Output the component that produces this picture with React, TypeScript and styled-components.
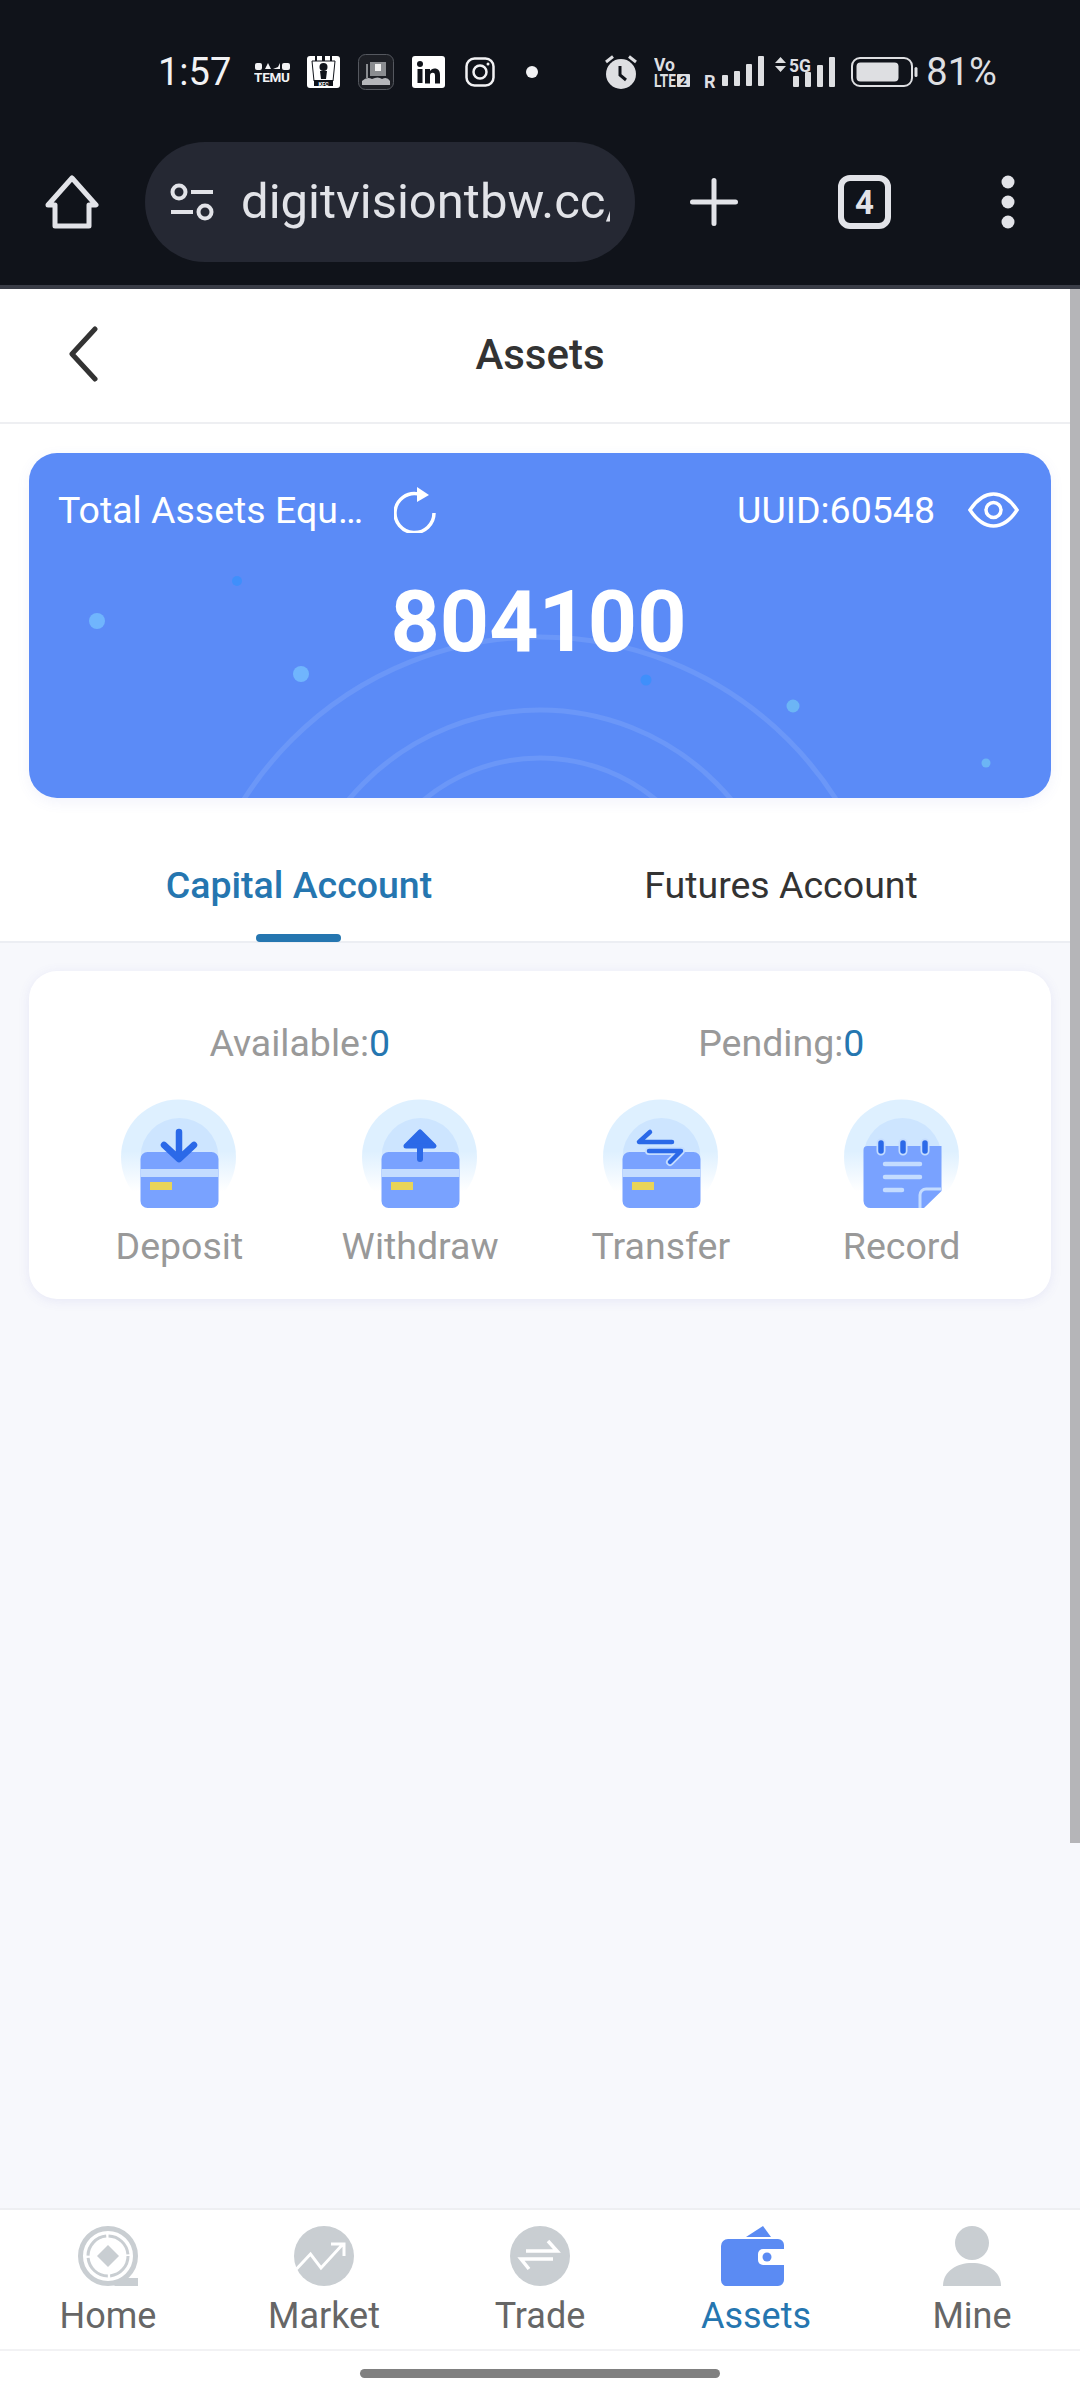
import * as React from 'react';
import styled, { createGlobalStyle } from 'styled-components';

const GlobalStyle = createGlobalStyle`
	html, body {
		margin: 0;
		padding: 0;
		background: #ffffff;
	}
	* {
		box-sizing: border-box;
	}
`;

const Screen = styled.div`
	width: 1080px;
	height: 2400px;
	display: flex;
	flex-direction: column;
	overflow: hidden;
	font-family: Roboto, 'Liberation Sans', sans-serif;
	background: #ffffff;
`;

/* browser chrome */
const Chrome = styled.div`
	height: 289px;
	flex: none;
	background: #10131a;
	border-bottom: 4px solid #3a3d47;
	color: #e2e3e8;
`;

const StatusBar = styled.div`
	height: 142px;
	padding: 2px 0 0 158px;
	display: flex;
	align-items: center;
`;

const BarItem = styled.div<{ $ml?: number }>`
	flex: none;
	display: flex;
	margin-left: ${(p) => p.$ml ?? 0}px;
`;

const Clock = styled.span`
	font-size: 38px;
	line-height: 44px;
	color: #f2f2f4;
`;

const Percent = styled.span`
	font-size: 38px;
	line-height: 44px;
	color: #dedfe2;
`;

const Toolbar = styled.div`
	height: 120px;
	padding-left: 45px;
	display: flex;
	align-items: center;
`;

const UrlPill = styled.div`
	width: 490px;
	height: 120px;
	margin-left: 46px;
	padding-left: 25px;
	border-radius: 60px;
	background: #252833;
	display: flex;
	align-items: center;
	gap: 27px;
`;

const UrlText = styled.div`
	width: 369px;
	overflow: hidden;
	white-space: nowrap;
	font-size: 49px;
	line-height: 60px;
	color: #e2e3e8;
`;

const TabCount = styled.div`
	width: 53px;
	height: 54px;
	margin-left: 100px;
	border: 6px solid #e2e3e8;
	border-radius: 12px;
	display: flex;
	align-items: center;
	justify-content: center;
	font-size: 33px;
	font-weight: 700;
	color: #e2e3e8;
`;

/* page */
const Page = styled.div`
	flex: 1;
	position: relative;
	display: flex;
	flex-direction: column;
	min-height: 0;
	background: #f7f8fc;
`;

const ScrollThumb = styled.div`
	position: absolute;
	top: 0;
	right: 0;
	width: 10px;
	height: 1554px;
	background: #b5b5b8;
`;

const PageHeader = styled.div`
	height: 135px;
	flex: none;
	display: grid;
	grid-template-columns: 1fr auto 1fr;
	align-items: center;
	padding-bottom: 3px;
	background: #ffffff;
	border-bottom: 2px solid #eeeff2;
`;

const BackButton = styled.div`
	padding-left: 67px;
	display: flex;
`;

const PageTitle = styled.div`
	font-size: 42px;
	font-weight: 500;
	color: #333333;
`;

const TopSection = styled.div`
	flex: none;
	background: #ffffff;
	padding-top: 29px;
`;

const HeroCard = styled.div`
	position: relative;
	width: 1022px;
	height: 345px;
	margin-left: 29px;
	padding: 34px 32px 0 29px;
	border-radius: 28px;
	overflow: hidden;
	background: #5b8bf7;
	color: #ffffff;
	box-shadow: 0 4px 14px rgba(91, 100, 200, 0.08);
`;

const HeroDecor = styled.svg`
	position: absolute;
	left: 0;
	top: 0;
`;

const HeroRow = styled.div`
	position: relative;
	height: 46px;
	display: flex;
	align-items: center;
`;

const HeroLabel = styled.span`
	width: 312px;
	overflow: hidden;
	white-space: nowrap;
	text-overflow: ellipsis;
	font-size: 37.5px;
`;

const RefreshIcon = styled.div`
	margin-left: 24px;
	display: flex;
`;

const HeroUuid = styled.span`
	margin-left: auto;
	font-size: 37.5px;
`;

const EyeIcon = styled.div`
	margin-left: 33px;
	display: flex;
`;

const HeroAmount = styled.div`
	position: relative;
	margin-top: 45px;
	text-align: center;
	font-size: 86px;
	line-height: 88px;
	font-weight: 700;
`;

const Tabs = styled.div`
	height: 145px;
	padding: 0 58px;
	display: grid;
	grid-template-columns: 1fr 1fr;
	border-bottom: 2px solid #eceef3;
`;

const Tab = styled.div<{ $active?: boolean }>`
	position: relative;
	display: flex;
	justify-content: center;
	padding-top: 65px;
	font-size: 37.5px;
	line-height: 44px;
	font-weight: ${(p) => (p.$active ? 500 : 400)};
	color: ${(p) => (p.$active ? '#2576b0' : '#333333')};
`;

const TabMarker = styled.div`
	position: absolute;
	left: 50%;
	bottom: -1px;
	width: 85px;
	height: 8px;
	margin-left: -43px;
	border-radius: 4px;
	background: #2576b0;
`;

const AccountCard = styled.div`
	flex: none;
	width: 1022px;
	height: 328px;
	margin: 28px 0 0 29px;
	padding: 50px 29px 0 30px;
	border-radius: 28px;
	background: #ffffff;
	box-shadow: 0 2px 12px rgba(90, 90, 200, 0.1);
`;

const BalanceRow = styled.div`
	display: grid;
	grid-template-columns: 1fr 1fr;
`;

const Balance = styled.div`
	text-align: center;
	font-size: 37.5px;
	line-height: 44px;
	color: #999999;
`;

const BalanceValue = styled.span`
	color: #2576b0;
`;

const ActionRow = styled.div`
	margin-top: 34px;
	display: grid;
	grid-template-columns: repeat(4, 1fr);
`;

const Action = styled.div`
	display: flex;
	flex-direction: column;
	align-items: center;
	font-size: 37.5px;
	line-height: 44px;
	color: #999999;
`;

const ActionLabel = styled.span`
	margin-top: 10px;
`;

const Spacer = styled.div`
	flex: 1;
`;

/* bottom nav */
const BottomNav = styled.div`
	flex: none;
	height: 143px;
	display: grid;
	grid-template-columns: repeat(5, 216px);
	background: #ffffff;
	border-top: 2px solid #eeeff2;
	border-bottom: 2px solid #f2f2f4;
`;

const NavItem = styled.div<{ $active?: boolean }>`
	padding-top: 16px;
	display: flex;
	flex-direction: column;
	align-items: center;
	font-size: 36px;
	line-height: 44px;
	color: ${(p) => (p.$active ? '#2576b0' : '#666666')};
`;

const NavLabel = styled.span`
	margin-top: 8px;
`;

const HomeBar = styled.div`
	flex: none;
	height: 49px;
	padding-top: 18px;
	display: flex;
	justify-content: center;
	background: #ffffff;
`;

const HomeHandle = styled.div`
	width: 360px;
	height: 9px;
	border-radius: 5px;
	background: #808080;
`;

const TinyLogoText = styled.text`
	font-family: Roboto, sans-serif;
	font-weight: 700;
`;

/* status icons */
const TemuIcon = () => (
	<svg width="36" height="20" viewBox="0 0 36 20">
		<rect x="1" y="1" width="7" height="7" rx="2" fill="#f2f2f4" />
		<path d="M11 7 l3 -6 l3 6z M19 7 l5 -2 l2 -4 v6z" fill="#f2f2f4" />
		<rect x="28" y="1" width="8" height="7" rx="2" fill="#f2f2f4" />
		<TinyLogoText x="0" y="20" fontSize="13.5" fill="#f2f2f4" textLength="36">TEMU</TinyLogoText>
	</svg>
);

const KfcIcon = () => (
	<svg width="33" height="32" viewBox="0 0 33 32">
		<rect width="33" height="32" rx="3" fill="#ffffff" />
		<path d="M8 0h2v5H8z M15 0h3v5h-3z M23 0h2v5h-2z" fill="#10131a" />
		<path d="M5 5h23l-2 20H7z" fill="#ffffff" stroke="#10131a" strokeWidth="1" />
		<circle cx="16.5" cy="11" r="4" fill="#10131a" />
		<path d="M13 15h7l-1 8h-5z" fill="#10131a" />
		<rect x="7" y="24" width="19" height="6" fill="#10131a" />
		<TinyLogoText x="16.5" y="29.5" fontSize="5.5" fill="#ffffff" textAnchor="middle">KFC</TinyLogoText>
	</svg>
);

const TrainIcon = () => (
	<svg width="36" height="36" viewBox="0 0 36 36">
		<rect x="0.5" y="0.5" width="35" height="35" rx="7" fill="#1d1f25" stroke="#55585f" />
		<path d="M8 10h2v14H8z M12 8h16v14H12z" fill="#8a8c90" />
		<rect x="17" y="10" width="6" height="7" fill="#f0f0f0" />
		<path d="M4 27 q5 -5 10 -2 q6 -3 10 0 q5 -3 8 2 v4 H4z" fill="#b5b6ba" />
	</svg>
);

const LinkedinIcon = () => (
	<svg width="33" height="32" viewBox="0 0 33 32">
		<rect width="33" height="32" rx="3" fill="#ffffff" />
		<circle cx="8" cy="8" r="3" fill="#10131a" />
		<path d="M5.5 13h5v14h-5z M13 13h5v2c1 -1.500 2.500 -2.500 4.500 -2.500c4 0 5.500 2.500 5.500 6.500v8.500h-5v-7.500c0 -2 -.5 -3.200 -2.200 -3.200c-1.800 0 -2.800 1.200 -2.800 3.200v7.500h-5z" fill="#10131a" />
	</svg>
);

const InstagramIcon = () => (
	<svg width="30" height="30" viewBox="0 0 30 30" fill="none" stroke="#f2f2f4" strokeWidth="2.500">
		<rect x="1.500" y="1.500" width="27" height="27" rx="8" />
		<circle cx="15" cy="15" r="6.500" />
		<circle cx="23" cy="7" r="1.500" fill="#f2f2f4" stroke="none" />
	</svg>
);

const NotificationDot = () => (
	<svg width="12" height="12" viewBox="0 0 12 12">
		<circle cx="6" cy="6" r="6" fill="#f2f2f4" />
	</svg>
);

const AlarmIcon = () => (
	<svg width="32" height="34" viewBox="0 0 32 34">
		<circle cx="16" cy="19" r="15" fill="#dedfe2" />
		<path d="M1 7 L8 1.500 M31 7 L24 1.500" stroke="#dedfe2" strokeWidth="3" />
		<path d="M15 11 V20 L21 25" fill="none" stroke="#10131a" strokeWidth="3" />
	</svg>
);

const VolteIcon = () => (
	<svg width="36" height="30" viewBox="0 0 36 30">
		<TinyLogoText x="0" y="13.500" fontSize="18" fill="#dedfe2" textLength="21" lengthAdjust="spacingAndGlyphs">Vo</TinyLogoText>
		<TinyLogoText x="0" y="30" fontSize="18" fill="#dedfe2" textLength="22" lengthAdjust="spacingAndGlyphs">LTE</TinyLogoText>
		<rect x="23" y="17" width="13" height="13" rx="1" fill="#dedfe2" />
		<TinyLogoText x="29.5" y="28" fontSize="12" fill="#10131a" textAnchor="middle">2</TinyLogoText>
	</svg>
);

const SignalBars = () => (
	<>
		<rect x="18" y="19" width="6" height="11" rx="1" />
		<rect x="30" y="15" width="6" height="15" rx="1" />
		<rect x="42" y="8" width="6" height="22" rx="1" />
		<rect x="54" y="0" width="6" height="30" rx="1" />
	</>
);

const RoamingSignal = () => (
	<svg width="60" height="32" viewBox="0 0 60 32" fill="#dedfe2">
		<TinyLogoText x="0" y="32" fontSize="18">R</TinyLogoText>
		<SignalBars />
	</svg>
);

const DataSignal = () => (
	<svg width="60" height="30" viewBox="0 0 60 30" fill="#dedfe2">
		<path d="M0 6 L5.500 0 L11 6z M0 9 L5.500 15 L11 9z" />
		<TinyLogoText x="14" y="14.500" fontSize="19" textLength="22" lengthAdjust="spacingAndGlyphs">5G</TinyLogoText>
		<SignalBars />
	</svg>
);

const BatteryIcon = () => (
	<svg width="67" height="30" viewBox="0 0 67 30">
		<rect x="1" y="1" width="60" height="28" rx="8" fill="none" stroke="#dedfe2" strokeWidth="2" />
		<rect x="5.500" y="5.500" width="42" height="19" rx="4" fill="#dedfe2" />
		<rect x="63.500" y="10" width="3" height="10" rx="1.500" fill="#dedfe2" />
	</svg>
);

/* chrome icons */
const HomeOutlineIcon = () => (
	<svg width="54" height="54" viewBox="0 0 54 54" fill="none" stroke="#e2e3e8" strokeWidth="5" strokeLinejoin="round">
		<path d="M27 3 L51 30 H44 V51 H10 V30 H3 Z" />
	</svg>
);

const SiteSettingsIcon = () => (
	<svg width="44" height="38" viewBox="0 0 44 38" fill="none" stroke="#e2e3e8" strokeWidth="4">
		<circle cx="9" cy="9" r="6.500" />
		<path d="M21 9 H43 M1 29 H23" />
		<circle cx="35" cy="29" r="6.500" />
	</svg>
);

const PlusIcon = () => (
	<svg width="48" height="48" viewBox="0 0 48 48" stroke="#e2e3e8" strokeWidth="5" strokeLinecap="round">
		<path d="M24 2.500 V45.500 M2.500 24 H45.500" />
	</svg>
);

const MenuDotsIcon = () => (
	<svg width="14" height="54" viewBox="0 0 14 54" fill="#e2e3e8">
		<circle cx="7" cy="7" r="6.500" />
		<circle cx="7" cy="27" r="6.500" />
		<circle cx="7" cy="47" r="6.500" />
	</svg>
);

/* action icons */
const Halo = ({ id }: { id: string }) => (
	<>
		<defs>
			<linearGradient id={`${id}-outer`} x1="0" y1="0" x2="0" y2="1">
				<stop offset="0.45" stopColor="#def0ff" />
				<stop offset="0.8" stopColor="#ffffff" />
			</linearGradient>
			<linearGradient id={`${id}-inner`} x1="0" y1="0" x2="0" y2="1">
				<stop offset="0.4" stopColor="#cde5ff" />
				<stop offset="0.8" stopColor="#eef6ff" />
			</linearGradient>
		</defs>
		<circle cx="57.500" cy="58" r="57.500" fill={`url(#${id}-outer)`} />
		<circle cx="58.500" cy="58" r="39" fill={`url(#${id}-inner)`} />
	</>
);

const BankCard = () => (
	<>
		<rect x="19.500" y="53" width="78" height="56" rx="7" fill="#79a2ff" />
		<rect x="19.500" y="70" width="78" height="8" fill="#c4dcff" />
		<rect x="29" y="83" width="22" height="8" fill="#e8d458" />
	</>
);

const ActionIconSvg = styled.svg`
	display: block;
`;

const DepositIcon = () => (
	<ActionIconSvg width="116" height="115" viewBox="0 0 116 115">
		<Halo id="deposit" />
		<BankCard />
		<path d="M58 33 V58 M43 46 L58 60 L73 46" fill="none" stroke="#2b69e8" strokeWidth="6.500" strokeLinecap="round" strokeLinejoin="round" />
	</ActionIconSvg>
);

const WithdrawIcon = () => (
	<ActionIconSvg width="116" height="115" viewBox="0 0 116 115">
		<Halo id="withdraw" />
		<BankCard />
		<path d="M58 36 V60" fill="none" stroke="#2b69e8" strokeWidth="6" strokeLinecap="round" />
		<path d="M44 47 L58 33 L72 47z" fill="#2b69e8" stroke="#2b69e8" strokeWidth="5" strokeLinejoin="round" />
	</ActionIconSvg>
);

const TransferIcon = () => (
	<ActionIconSvg width="116" height="115" viewBox="0 0 116 115">
		<Halo id="transfer" />
		<BankCard />
		<path d="M47 33 L36 43 H69" fill="none" stroke="#2b69e8" strokeWidth="4.500" strokeLinecap="round" strokeLinejoin="round" />
		<path d="M46 52 H78 L67 63" fill="none" stroke="#c4dcff" strokeWidth="8" strokeLinecap="round" strokeLinejoin="round" />
		<path d="M46 52 H78 L67 63" fill="none" stroke="#2b69e8" strokeWidth="4.500" strokeLinecap="round" strokeLinejoin="round" />
	</ActionIconSvg>
);

const RecordIcon = () => (
	<ActionIconSvg width="116" height="115" viewBox="0 0 116 115">
		<Halo id="record" />
		<path d="M19.500 51 a4 4 0 0 1 4 -4 H97.500 V92 L80 109 H27 a7 7 0 0 1 -7.500 -7z" fill="#79a2ff" />
		<path d="M37 44 V52 M59 44 V52 M81 44 V52" stroke="#c4dcff" strokeWidth="9" strokeLinecap="round" />
		<path d="M37 44 V52 M59 44 V52 M81 44 V52" stroke="#2b69e8" strokeWidth="5.500" strokeLinecap="round" />
		<path d="M41 65 H76 M41 78 H76 M41 91 H58" stroke="#c4dcff" strokeWidth="4.500" strokeLinecap="round" />
		<path d="M76 109 V96 a6 6 0 0 1 6 -6 H97" fill="none" stroke="#c4dcff" strokeWidth="3" />
	</ActionIconSvg>
);

/* nav icons */
const NavIconSvg = styled.svg`
	display: block;
`;

const NavHomeIcon = () => (
	<NavIconSvg width="60" height="60" viewBox="0 0 60 60" fill="none" stroke="#c9ced2">
		<circle cx="30" cy="30" r="27.500" strokeWidth="5" />
		<circle cx="30" cy="30" r="20" strokeWidth="3" strokeDasharray="29 2.400" />
		<path d="M30 19 L41 30 L30 41 L19 30z" fill="#c9ced2" stroke="none" />
		<path d="M36 60 H60 V52 H50 L44 51z" fill="#c9ced2" stroke="none" />
	</NavIconSvg>
);

const NavMarketIcon = () => (
	<NavIconSvg width="60" height="60" viewBox="0 0 60 60">
		<circle cx="30" cy="30" r="30" fill="#c9ced2" />
		<path d="M2.500 43 L16.500 28 L27 42 L49 18 M37 18 H50 V30" fill="none" stroke="#ffffff" strokeWidth="3" />
	</NavIconSvg>
);

const NavTradeIcon = () => (
	<NavIconSvg width="60" height="60" viewBox="0 0 60 60">
		<circle cx="30" cy="30" r="30" fill="#c9ced2" />
		<path d="M16 25 H47 L38 15 M43 33 H11 L19 43" fill="none" stroke="#ffffff" strokeWidth="3.500" />
	</NavIconSvg>
);

const NavAssetsIcon = () => (
	<NavIconSvg width="70" height="60" viewBox="0 0 70 60">
		<path d="M25 11 L42 0 L50 11z" fill="#5b8bf3" />
		<path d="M7 13 H57 a6 6 0 0 1 6 6 V54 a6 6 0 0 1 -6 6 H7 a6 6 0 0 1 -7 -6 V20 a7 7 0 0 1 7 -7z" fill="#5b8bf3" />
		<path d="M63 23 H42 a5 5 0 0 0 -5 5 V34 a5 5 0 0 0 5 5 H63z" fill="#ffffff" />
		<circle cx="46" cy="31" r="4.500" fill="#5b8bf3" />
	</NavIconSvg>
);

const NavMineIcon = () => (
	<NavIconSvg width="60" height="60" viewBox="0 0 60 60" fill="#c9ced2">
		<circle cx="30" cy="17" r="17" />
		<path d="M1 60 C1 45 15 37 30 37 C45 37 59 45 59 60z" />
	</NavIconSvg>
);

const heroDots = [
	{ x: 68, y: 168, r: 8, color: '#70b5fd' },
	{ x: 208, y: 128, r: 5, color: '#3f8ffb' },
	{ x: 272, y: 221, r: 8, color: '#70b5fd' },
	{ x: 617, y: 227, r: 5.5, color: '#3f8ffb' },
	{ x: 764, y: 253, r: 6.5, color: '#6cb5f5' },
	{ x: 957, y: 310, r: 4.5, color: '#6cb5f5' },
];

const heroArcs = [
	{ cy: 535, r: 351 },
	{ cy: 506, r: 249 },
	{ cy: 487, r: 182 },
];

const actions = [
	{ label: 'Deposit', icon: <DepositIcon /> },
	{ label: 'Withdraw', icon: <WithdrawIcon /> },
	{ label: 'Transfer', icon: <TransferIcon /> },
	{ label: 'Record', icon: <RecordIcon /> },
];

const navItems = [
	{ label: 'Home', icon: <NavHomeIcon /> },
	{ label: 'Market', icon: <NavMarketIcon /> },
	{ label: 'Trade', icon: <NavTradeIcon /> },
	{ label: 'Assets', icon: <NavAssetsIcon />, active: true },
	{ label: 'Mine', icon: <NavMineIcon /> },
];

const App = () => {
	return (
		<Screen>
			<GlobalStyle />
			<Chrome>
				<StatusBar>
					<Clock>1:57</Clock>
					<BarItem $ml={23}><TemuIcon /></BarItem>
					<BarItem $ml={17}><KfcIcon /></BarItem>
					<BarItem $ml={18}><TrainIcon /></BarItem>
					<BarItem $ml={18}><LinkedinIcon /></BarItem>
					<BarItem $ml={20}><InstagramIcon /></BarItem>
					<BarItem $ml={31}><NotificationDot /></BarItem>
					<BarItem $ml={67}><AlarmIcon /></BarItem>
					<BarItem $ml={17}><VolteIcon /></BarItem>
					<BarItem $ml={14}><RoamingSignal /></BarItem>
					<BarItem $ml={11}><DataSignal /></BarItem>
					<BarItem $ml={16}><BatteryIcon /></BarItem>
					<BarItem $ml={8}><Percent>81%</Percent></BarItem>
				</StatusBar>
				<Toolbar>
					<HomeOutlineIcon />
					<UrlPill>
						<SiteSettingsIcon />
						<UrlText>digitvisiontbw.cc/</UrlText>
					</UrlPill>
					<BarItem $ml={55}><PlusIcon /></BarItem>
					<TabCount>4</TabCount>
					<BarItem $ml={110}><MenuDotsIcon /></BarItem>
				</Toolbar>
			</Chrome>
			<Page>
				<PageHeader>
					<BackButton>
						<svg width="36" height="56" viewBox="0 0 36 56" fill="none" stroke="#333333" strokeWidth="5" strokeLinecap="round" strokeLinejoin="round">
							<path d="M28 3 L5 28 L28 53" />
						</svg>
					</BackButton>
					<PageTitle>Assets</PageTitle>
				</PageHeader>
				<TopSection>
					<HeroCard>
						<HeroDecor width="1023" height="345" viewBox="0 0 1023 345" fill="none">
							{heroArcs.map((arc) => (
								<circle key={arc.r} cx="511" cy={arc.cy} r={arc.r} stroke="#6b97f8" strokeWidth="5" />
							))}
							{heroDots.map((dot) => (
								<circle key={dot.x} cx={dot.x} cy={dot.y} r={dot.r} fill={dot.color} />
							))}
						</HeroDecor>
						<HeroRow>
							<HeroLabel>Total Assets Equivalent</HeroLabel>
							<RefreshIcon>
								<svg width="42" height="46" viewBox="0 0 42 46" fill="none" stroke="#ffffff" strokeWidth="3.500">
									<path d="M40 26 A19.500 19.500 0 1 1 24 6.900" />
									<path d="M23 0 L35 8 L23 15z" fill="#ffffff" stroke="none" />
								</svg>
							</RefreshIcon>
							<HeroUuid>UUID:60548</HeroUuid>
							<EyeIcon>
								<svg width="51" height="36" viewBox="0 0 51 36" fill="none" stroke="#ffffff" strokeWidth="3.500">
									<path d="M2 18 C10 6 18 2 25.500 2 C33 2 41 6 49 18 C41 30 33 34 25.500 34 C18 34 10 30 2 18z" />
									<circle cx="25.500" cy="18" r="7.500" />
								</svg>
							</EyeIcon>
						</HeroRow>
						<HeroAmount>804100</HeroAmount>
					</HeroCard>
					<Tabs>
						<Tab $active>Capital Account<TabMarker /></Tab>
						<Tab>Futures Account</Tab>
					</Tabs>
				</TopSection>
				<AccountCard>
					<BalanceRow>
						<Balance>Available:<BalanceValue>0</BalanceValue></Balance>
						<Balance>Pending:<BalanceValue>0</BalanceValue></Balance>
					</BalanceRow>
					<ActionRow>
						{actions.map((action) => (
							<Action key={action.label}>
								{action.icon}
								<ActionLabel>{action.label}</ActionLabel>
							</Action>
						))}
					</ActionRow>
				</AccountCard>
				<Spacer />
				<ScrollThumb />
			</Page>
			<BottomNav>
				{navItems.map((item) => (
					<NavItem key={item.label} $active={item.active}>
						{item.icon}
						<NavLabel>{item.label}</NavLabel>
					</NavItem>
				))}
			</BottomNav>
			<HomeBar>
				<HomeHandle />
			</HomeBar>
		</Screen>
	);
};

export default App;
